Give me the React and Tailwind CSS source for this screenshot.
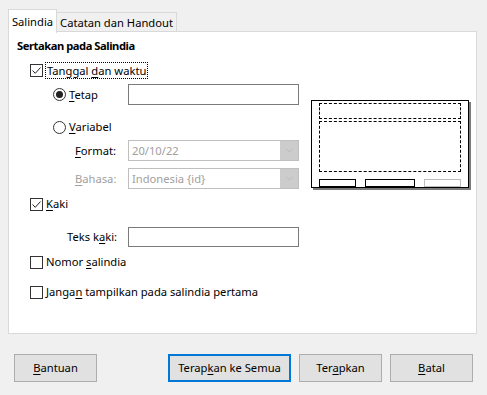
import { ChevronDown } from 'lucide-react'

const U = ({ children }) => <span className="underline underline-offset-2">{children}</span>

function Check({ checked }) {
  return (
    <span className="w-[13px] h-[13px] border border-[#333] bg-white flex items-center justify-center shrink-0">
      {checked && (
        <svg width="11" height="11" viewBox="0 0 11 11">
          <path d="M1.5 5.5 L4.3 8.3 L9.5 2.5" fill="none" stroke="#222" strokeWidth="1" />
        </svg>
      )}
    </span>
  )
}

function Radio({ checked }) {
  return (
    <span className="w-[13px] h-[13px] rounded-full border border-[#333] bg-white flex items-center justify-center shrink-0">
      {checked && <span className="w-[7px] h-[7px] rounded-full bg-[#222]" />}
    </span>
  )
}

function Select({ value }) {
  return (
    <div className="w-[171px] h-[21px] border border-[#bfbfbf] bg-white flex items-center">
      <span className="flex-1 pl-[3px] text-[#a0a0a0]">{value}</span>
      <span className="w-[18px] h-full bg-[#cccccc] flex items-center justify-center">
        <ChevronDown size={11} strokeWidth={1.2} className="text-[#a8a8a8]" />
      </span>
    </div>
  )
}

function Btn({ children, focus }) {
  return (
    <button
      className={
        'h-[28px] flex items-center justify-center bg-[#e1e1e1] ' +
        (focus ? 'w-[123px] border-2 border-[#0078d7]' : 'w-[83px] border border-[#adadad]')
      }
    >
      {children}
    </button>
  )
}

export default function App() {
  return (
    <div className="w-[487px] h-[395px] bg-[#f0f0f0] text-black text-[11.2px] leading-none font-['Noto_Sans',sans-serif] overflow-hidden">
      {/* tabs */}
      <div className="flex items-end pl-[8px] pt-[8px] h-[32px]">
        <div className="relative z-10 w-[49px] h-[24px] bg-white border border-b-0 border-[#d9d9d9] flex items-center justify-center -mb-px">
          Salindia
        </div>
        <div className="w-[120px] h-[20px] border border-b-0 border-l-0 border-[#d9d9d9] flex items-center justify-center">
          Catatan dan Handout
        </div>
      </div>

      {/* panel */}
      <div className="ml-[8px] w-[469px] h-[303px] -mt-px border border-[#d9d9d9] bg-white">
        <div className="h-[16px] mt-[6px] pl-[8px] flex items-center font-bold tracking-[-0.45px]">Sertakan pada Salindia</div>

        <div className="flex items-start">
          <div className="w-[300px]">
            <div className="mt-[8px] h-[17px] pl-[21px] flex items-center">
              <Check checked />
              <span className="ml-[2px] h-[17px] px-[1px] border border-dotted border-black flex items-center">
                <span>Tanggal <U>d</U>an waktu</span>
              </span>
            </div>

            <div className="mt-[5px] h-[21px] flex items-center">
              <div className="w-[119px] pl-[44px] flex items-center">
                <Radio checked />
                <span className="ml-[3px]"><U>T</U>etap</span>
              </div>
              <div className="w-[171px] h-[21px] border border-[#7a7a7a]" />
            </div>

            <div className="mt-[12px] h-[20px] pl-[44px] flex items-center">
              <Radio />
              <span className="ml-[3px]"><U>V</U>ariabel</span>
            </div>

            <div className="mt-[3px] h-[21px] flex items-center">
              <span className="w-[119px] pl-[66px]"><U>F</U>ormat:</span>
              <Select value="20/10/22" />
            </div>

            <div className="mt-[7px] h-[21px] flex items-center">
              <span className="w-[119px] pl-[66px] text-[#a0a0a0]"><U>B</U>ahasa:</span>
              <Select value="Indonesia {id}" />
            </div>
          </div>

          <div className="ml-[2px] mt-[46px]">
            <div className="w-[158px] h-[88px] border border-black bg-white shadow-[2px_2px_0_#7a7a7a] flex flex-col px-[7px] pt-[2px]">
              <div className="h-[16px] border border-dashed border-black" />
              <div className="mt-[2px] h-[51px] border border-dashed border-black" />
              <div className="mt-[7px] flex">
                <div className="w-[37px] h-[8px] border border-black" />
                <div className="ml-[9px] w-[51px] h-[8px] border border-black" />
                <div className="ml-[9px] w-[37px] h-[8px] border border-[#bdbdbd]" />
              </div>
            </div>
          </div>
        </div>

        <div className="mt-[8px] h-[14px] pl-[21px] flex items-center">
          <Check checked />
          <span className="ml-[3px]"><U>K</U>aki</span>
        </div>

        <div className="mt-[16px] h-[20px] flex items-center">
          <span className="w-[119px] pl-[58px]">Teks k<U>a</U>ki:</span>
          <div className="w-[171px] h-[20px] border border-[#7a7a7a]" />
        </div>

        <div className="mt-[8px] h-[14px] pl-[21px] flex items-center">
          <Check />
          <span className="ml-[3px]">Nomor <U>s</U>alindia</span>
        </div>

        <div className="mt-[16px] h-[14px] pl-[21px] flex items-center">
          <Check />
          <span className="ml-[3px]">Janga<U>n</U> tampilkan pada salindia pertama</span>
        </div>
      </div>

      {/* buttons */}
      <div className="mt-[20px] pl-[14px] flex items-center">
        <Btn><span><U>B</U>antuan</span></Btn>
        <div className="ml-[71px]">
          <Btn focus><span>Terap<U>k</U>an ke Semua</span></Btn>
        </div>
        <div className="ml-[8px]">
          <Btn><span>Ter<U>a</U>pkan</span></Btn>
        </div>
        <div className="ml-[8px]">
          <Btn><span><U>B</U>atal</span></Btn>
        </div>
      </div>
    </div>
  )
}
